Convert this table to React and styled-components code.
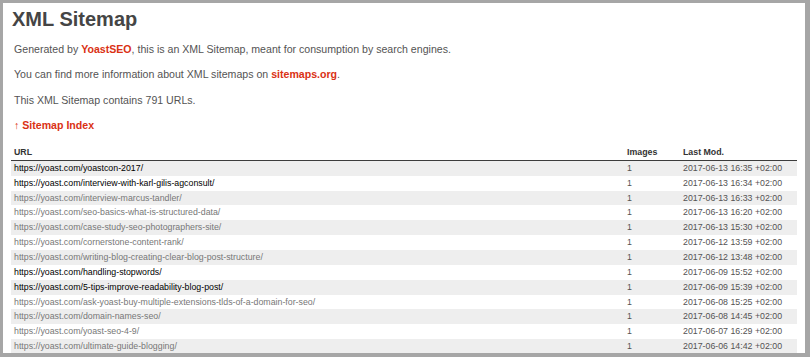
import React from 'react';
import styled, { createGlobalStyle } from 'styled-components';

const GlobalStyle = createGlobalStyle`
  html, body {
    margin: 0;
    padding: 0;
    background: #a6a6a6;
  }
  body {
    font-family: "Liberation Sans", Arial, Helvetica, sans-serif;
  }
`;

const Frame = styled.div`
  width: 810px;
  height: 357px;
  box-sizing: border-box;
  padding: 3px 5px 4px 3px;
  background: #a6a6a6;
`;

const Page = styled.div`
  height: 100%;
  background: #fff;
  overflow: hidden;
  box-sizing: border-box;
  padding: 4px 8px 0 8px;
  color: #545353;
`;

const Title = styled.h1`
  margin: 0 0 0 1px;
  font-size: 20px;
  line-height: 24px;
  font-weight: 700;
  color: #454545;
`;

const Expl = styled.p`
  margin: 12px 3px 0 3px;
  font-size: 10.6px;
  line-height: 12.6px;
  color: #545353;

  & + & {
    margin-top: 12.7px;
  }
`;

const RedLink = styled.a`
  color: #da3114;
  font-weight: 700;
  text-decoration: none;
`;

const Table = styled.table`
  margin-top: 13.5px;
  width: 786px;
  border-collapse: collapse;
  table-layout: fixed;
`;

const Th = styled.th`
  text-align: left;
  font-size: 8.8px;
  font-weight: 700;
  color: #333;
  height: 15px;
  padding: 0 3px;
  border-bottom: 1px solid #3c3c3c;
`;

const Row = styled.tr`
  background: ${p => (p.$striped ? '#eee' : '#fff')};
`;

const Td = styled.td`
  font-size: 8.8px;
  height: 14.85px;
  line-height: 14.85px;
  padding: 0 3px;
  color: #545353;
  white-space: nowrap;
  overflow: hidden;
`;

const UrlLink = styled.a`
  color: ${p => (p.$visited ? '#777' : '#000')};
  text-decoration: none;
`;

const entries = [
  ['yoastcon-2017/', false, '2017-06-13 16:35 +02:00'],
  ['interview-with-karl-gilis-agconsult/', false, '2017-06-13 16:34 +02:00'],
  ['interview-marcus-tandler/', true, '2017-06-13 16:33 +02:00'],
  ['seo-basics-what-is-structured-data/', true, '2017-06-13 16:20 +02:00'],
  ['case-study-seo-photographers-site/', true, '2017-06-13 15:30 +02:00'],
  ['cornerstone-content-rank/', true, '2017-06-12 13:59 +02:00'],
  ['writing-blog-creating-clear-blog-post-structure/', true, '2017-06-12 13:48 +02:00'],
  ['handling-stopwords/', false, '2017-06-09 15:52 +02:00'],
  ['5-tips-improve-readability-blog-post/', false, '2017-06-09 15:39 +02:00'],
  ['ask-yoast-buy-multiple-extensions-tlds-of-a-domain-for-seo/', true, '2017-06-08 15:25 +02:00'],
  ['domain-names-seo/', true, '2017-06-08 14:45 +02:00'],
  ['yoast-seo-4-9/', true, '2017-06-07 16:29 +02:00'],
  ['ultimate-guide-blogging/', true, '2017-06-06 14:42 +02:00'],
];

export default function App() {
  return (
    <>
      <GlobalStyle />
      <Frame>
        <Page>
          <Title>XML Sitemap</Title>
          <Expl>
            Generated by <RedLink href="#">YoastSEO</RedLink>, this is an XML Sitemap, meant for consumption by search engines.
          </Expl>
          <Expl>
            You can find more information about XML sitemaps on <RedLink href="#">sitemaps.org</RedLink>.
          </Expl>
          <Expl>This XML Sitemap contains 791 URLs.</Expl>
          <Expl>
            <RedLink href="#">↑ Sitemap Index</RedLink>
          </Expl>
          <Table>
            <colgroup>
              <col style={{ width: 613 }} />
              <col style={{ width: 56 }} />
              <col style={{ width: 117 }} />
            </colgroup>
            <thead>
              <tr>
                <Th>URL</Th>
                <Th>Images</Th>
                <Th>Last Mod.</Th>
              </tr>
            </thead>
            <tbody>
              {entries.map(([slug, visited, mod], i) => (
                <Row key={slug} $striped={i % 2 === 0}>
                  <Td>
                    <UrlLink href="#" $visited={visited}>https://yoast.com/{slug}</UrlLink>
                  </Td>
                  <Td>1</Td>
                  <Td>{mod}</Td>
                </Row>
              ))}
            </tbody>
          </Table>
        </Page>
      </Frame>
    </>
  );
}
